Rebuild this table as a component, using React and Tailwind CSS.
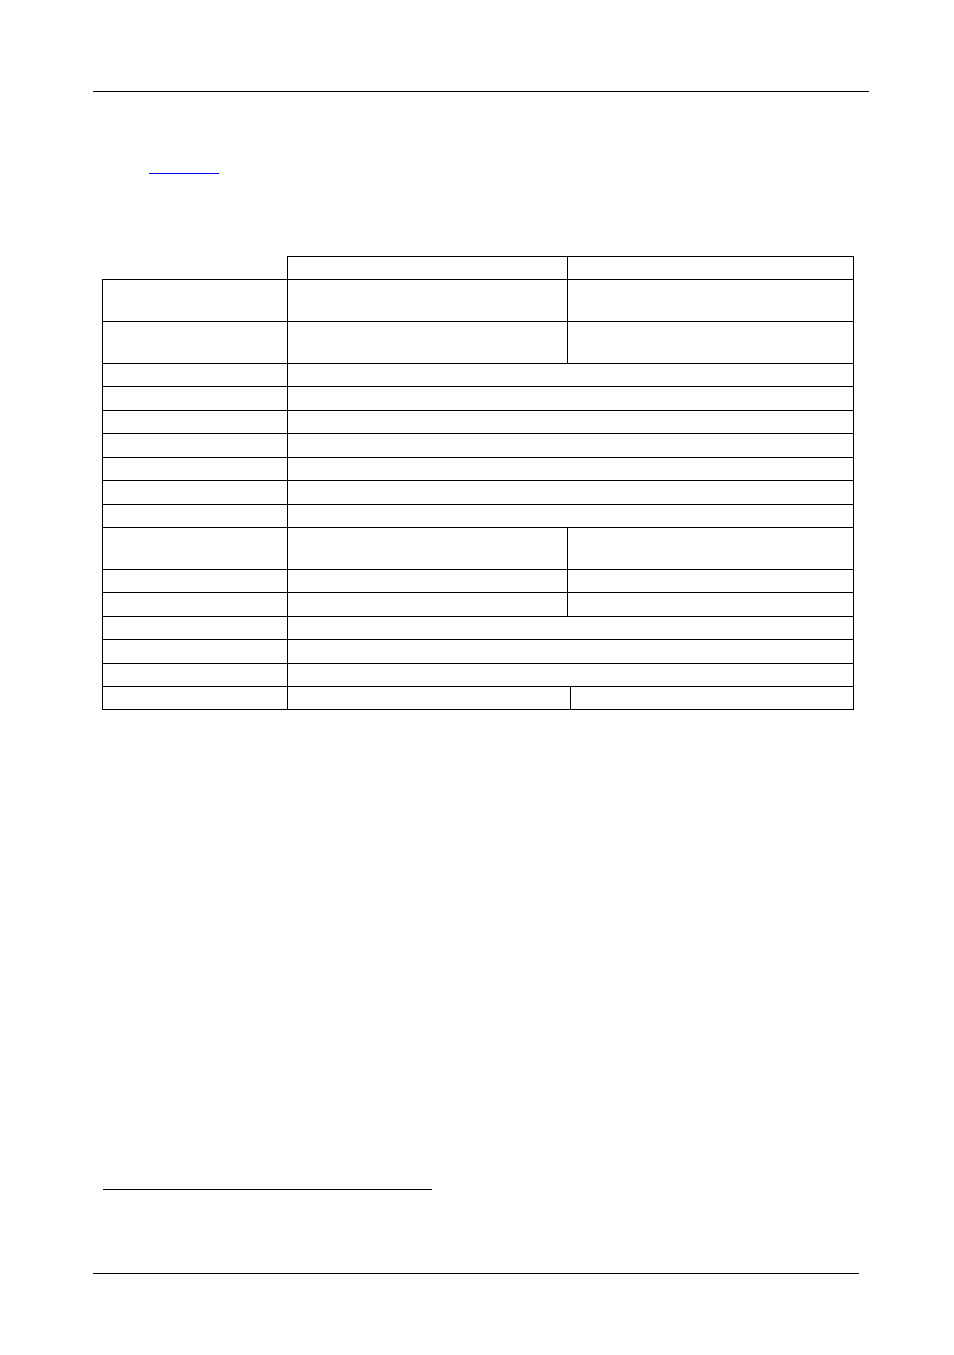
import React from "react";

const rows = [
  { h: 42, split: 567 },
  { h: 42, split: 567 },
  { h: 23 },
  { h: 24 },
  { h: 23 },
  { h: 24 },
  { h: 23 },
  { h: 24 },
  { h: 23 },
  { h: 42, split: 567 },
  { h: 23, split: 567 },
  { h: 24, split: 567 },
  { h: 23 },
  { h: 24 },
  { h: 23 },
  { h: 24, split: 570, last: true },
];

function Row({ h, split, last }) {
  const bb = last ? "border-b" : "";
  return (
    <div className="flex" style={{ height: h }}>
      <div className={`w-[185px] shrink-0 border-t border-l border-black ${bb}`} />
      {split === 567 && (
        <>
          <div className={`w-[280px] shrink-0 border-t border-l border-black ${bb}`} />
          <div className={`w-[287px] shrink-0 border-t border-l border-r border-black ${bb}`} />
        </>
      )}
      {split === 570 && (
        <>
          <div className={`w-[283px] shrink-0 border-t border-l border-black ${bb}`} />
          <div className={`w-[284px] shrink-0 border-t border-l border-r border-black ${bb}`} />
        </>
      )}
      {!split && (
        <div className={`w-[567px] shrink-0 border-t border-l border-r border-black ${bb}`} />
      )}
    </div>
  );
}

export default function App() {
  return (
    <div
      className="w-[954px] min-h-[1355px] bg-white pt-[91px]"
      style={{ fontFamily: '"Liberation Sans", Arial, sans-serif' }}
    >
      <div className="ml-[93px] w-[776px] h-px bg-black" />
      <div className="ml-[149px] mt-[81px] w-[70px] h-px bg-[#0000ff]" />
      <div className="ml-[102px] mt-[82px] w-[752px] flex flex-col">
        <div className="flex h-[23px]">
          <div className="w-[185px] shrink-0" />
          <div className="w-[280px] shrink-0 border-t border-l border-black" />
          <div className="w-[287px] shrink-0 border-t border-l border-r border-black" />
        </div>
        {rows.map((r, i) => (
          <Row key={i} {...r} />
        ))}
      </div>
      <div className="ml-[103px] mt-[479px] w-[329px] h-px bg-black" />
      <div className="ml-[93px] mt-[83px] w-[766px] h-px bg-black" />
    </div>
  );
}
